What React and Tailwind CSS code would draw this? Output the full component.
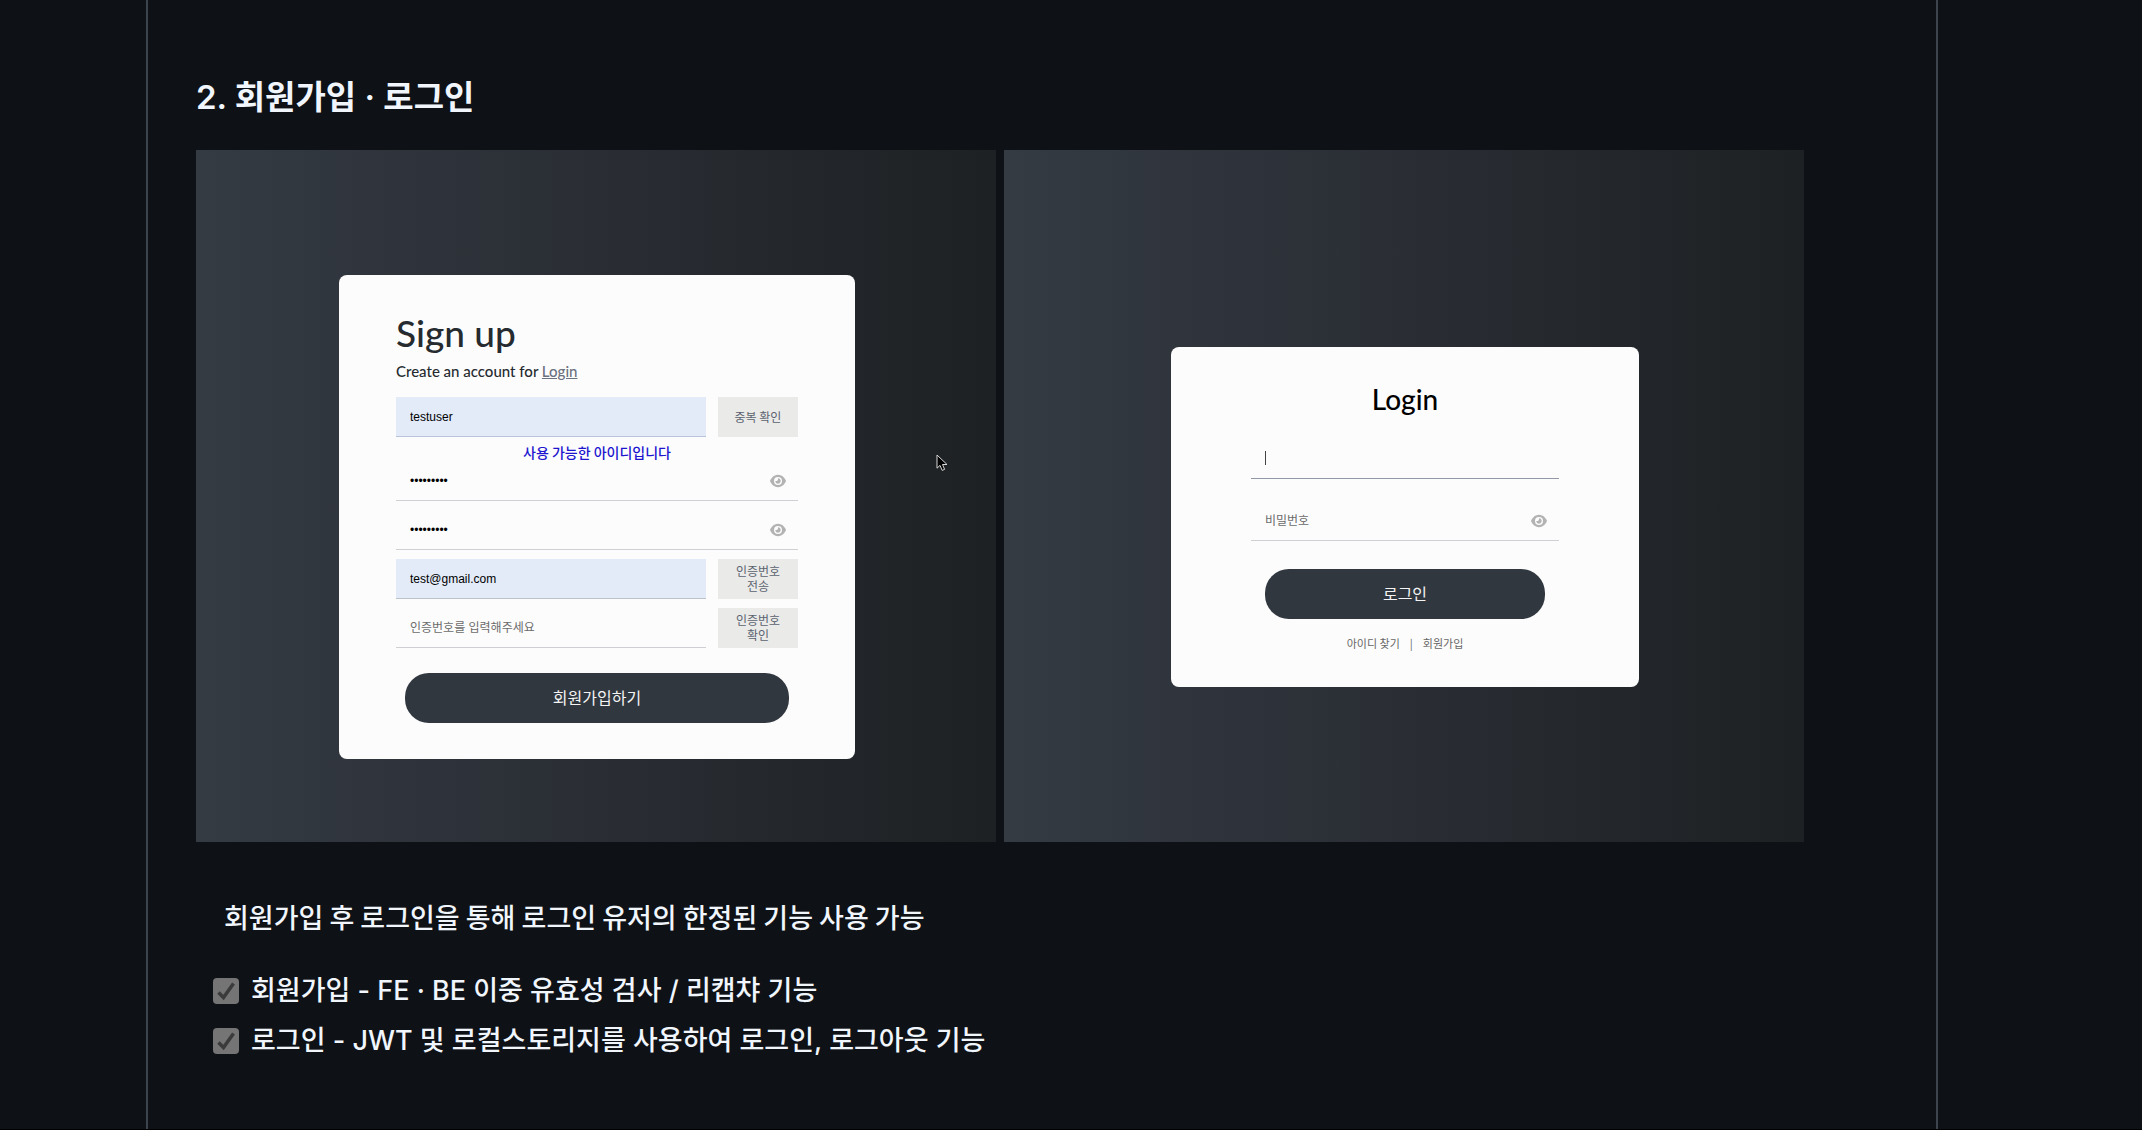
import { useState } from "react"
import { FaEye } from "react-icons/fa6"

const fieldClasses = "w-full min-w-0 h-10 px-3.5 border-b text-black outline-none font-['Liberation_Sans','Noto_Sans_CJK_KR',sans-serif] text-xs placeholder:text-[#6b6b6b]"
const koreanClasses = "font-['Noto_Sans_CJK_KR',sans-serif]"

const features = [
  { id: "signup-feature", label: "회원가입 - FE · BE 이중 유효성 검사 / 리캡챠 기능" },
  { id: "login-feature",  label: "로그인 - JWT 및 로컬스토리지를 사용하여 로그인, 로그아웃 기능" },
]

function Cursor() {
  return (
    <svg viewBox="0 0 12 18" className="absolute left-[92.5%] top-[44%] w-3 h-[18px]" aria-hidden="true">
      <path
        d="M1 1v13.2l3-2.8 2.2 5 2.4-1-2.1-4.9H11z"
        fill="#000"
        stroke="#d8d8d8"
        strokeWidth="1"
        strokeLinejoin="round"
      />
    </svg>
  )
}

function Screen({ children }) {
  return (
    <div className="relative aspect-[800/692] flex items-center justify-center pt-[42px] pl-0.5 bg-linear-to-r from-[#343b43] via-[#2a2d34] to-[#1d2123]">
      {children}
    </div>
  )
}

function PasswordField({ label, placeholder, defaultValue }) {
  const [visible, setVisible] = useState(false)

  return (
    <div className="relative">
      <input
        type={visible ? "text" : "password"}
        aria-label={label}
        placeholder={placeholder}
        defaultValue={defaultValue}
        className={`${fieldClasses} border-[#d0d0d4]`}
      />
      <button
        type="button"
        aria-label="비밀번호 보기"
        onClick={() => setVisible((v) => !v)}
        className="absolute right-3 top-3 text-[#b3b3b3]"
      >
        <FaEye className="size-4" />
      </button>
    </div>
  )
}

function SideButton({ children }) {
  return (
    <button
      type="button"
      className={`w-20 h-10 shrink-0 bg-[#eaeae8] text-[#5b6370] text-xs leading-[15px] break-keep px-4 pb-0.5 ${koreanClasses}`}
    >
      {children}
    </button>
  )
}

function SubmitButton({ children }) {
  return (
    <button
      type="submit"
      className={`block h-[50px] pb-0.5 rounded-3xl bg-[#31373f] text-[#f4f4f4] text-base ${koreanClasses}`}
    >
      {children}
    </button>
  )
}

function SignupCard() {
  return (
    <form
      onSubmit={(e) => e.preventDefault()}
      className="w-[516px] px-[57px] pt-9 pb-9 rounded-lg bg-[#fcfcfc] font-[Lato,sans-serif] font-medium"
    >
      <h3 className="text-[37px] leading-11 text-[#262b30]">Sign up</h3>
      <p className="mt-1.5 text-[15px] leading-5 text-[#262b30]">
        Create an account for <a href="#login" className="text-[#6b7280] underline">Login</a>
      </p>

      <div className="mt-4 flex gap-3 font-normal">
        <input
          type="text"
          aria-label="아이디"
          defaultValue="testuser"
          className={`${fieldClasses} bg-[#e3ebf8] border-[#b9c3da]`}
        />
        <SideButton>중복 확인</SideButton>
      </div>
      <p className={`pt-1.5 text-center text-sm leading-[18px] text-[#2015cf] ${koreanClasses}`}>
        사용 가능한 아이디입니다
      </p>

      <div className="flex flex-col gap-[9px] font-normal">
        <PasswordField label="비밀번호" defaultValue="test12345" />
        <PasswordField label="비밀번호 확인" defaultValue="test12345" />
        <div className="flex gap-3">
          <input
            type="email"
            aria-label="이메일"
            defaultValue="test@gmail.com"
            className={`${fieldClasses} bg-[#e3ebf8] border-[#b9c3c8]`}
          />
          <SideButton>인증번호 전송</SideButton>
        </div>
        <div className="flex gap-3">
          <input
            type="text"
            aria-label="인증번호"
            placeholder="인증번호를 입력해주세요"
            className={`${fieldClasses} border-[#d0d0d4]`}
          />
          <SideButton>인증번호 확인</SideButton>
        </div>
      </div>

      <div className="mt-[25px] px-[9px] grid font-normal">
        <SubmitButton>회원가입하기</SubmitButton>
      </div>
    </form>
  )
}

function LoginCard() {
  return (
    <form
      id="login"
      onSubmit={(e) => e.preventDefault()}
      className="w-[468px] px-20 pt-8 pb-9 rounded-lg bg-[#fcfcfc]"
    >
      <h3 className="text-[28px] leading-10 text-center font-medium text-black font-[Lato,sans-serif]">Login</h3>

      <div className="relative mt-5">
        <input type="text" aria-label="아이디" className={`${fieldClasses} border-[#9298a5]`} />
        <span className="absolute left-3.5 top-3 w-px h-3.5 bg-[#444]" />
      </div>
      <div className="mt-[22px]">
        <PasswordField label="비밀번호" placeholder="비밀번호" />
      </div>

      <div className="mt-7 px-3.5 grid">
        <SubmitButton>로그인</SubmitButton>
      </div>
      <div className={`mt-4 flex justify-center gap-2.5 text-[11px] leading-4 text-[#666] ${koreanClasses}`}>
        <a href="#find-id">아이디 찾기</a>
        <span>|</span>
        <a href="#signup">회원가입</a>
      </div>
    </form>
  )
}

function Feature({ id, label }) {
  return (
    <li className="flex items-center gap-3 h-[50px]">
      <span className="relative size-[26px]">
        <input
          id={id}
          type="checkbox"
          checked
          disabled
          readOnly
          className="block size-[26px] appearance-none rounded-sm bg-[#757575]"
        />
        <svg viewBox="0 0 26 26" className="absolute inset-0 pointer-events-none" aria-hidden="true">
          <path d="M5.500 14.500l5 5L20.500 5.500" fill="none" stroke="#3b3b3b" strokeWidth="3.500" />
        </svg>
      </span>
      <label htmlFor={id}>{label}</label>
    </li>
  )
}

export default function App() {
  return (
    <div className="min-h-screen flex bg-[#0e1116] border-b border-black text-[#f0f6fc] font-[Inter,'Noto_Sans_CJK_KR',sans-serif]">
      <main className="flex-1 ml-[146px] mr-[204px] px-12 pt-[72px] border-x-2 border-[#3d444d]">
        <h2 className="text-[33px] leading-[50px] font-semibold">2. 회원가입 · 로그인</h2>

        <div className="mt-7 max-w-[1608px] grid grid-cols-2 gap-2">
          <Screen>
            <SignupCard />
            <Cursor />
          </Screen>
          <Screen>
            <LoginCard />
          </Screen>
        </div>

        <p className={`mt-[54px] pl-7 text-[27px] leading-[42px] font-medium ${koreanClasses}`}>
          회원가입 후 로그인을 통해 로그인 유저의 한정된 기능 사용 가능
        </p>
        <ul className="mt-7 pl-[17px] text-[27px] leading-[42px] font-medium">
          {features.map((feature) => (
            <Feature key={feature.id} {...feature} />
          ))}
        </ul>
      </main>
    </div>
  )
}
